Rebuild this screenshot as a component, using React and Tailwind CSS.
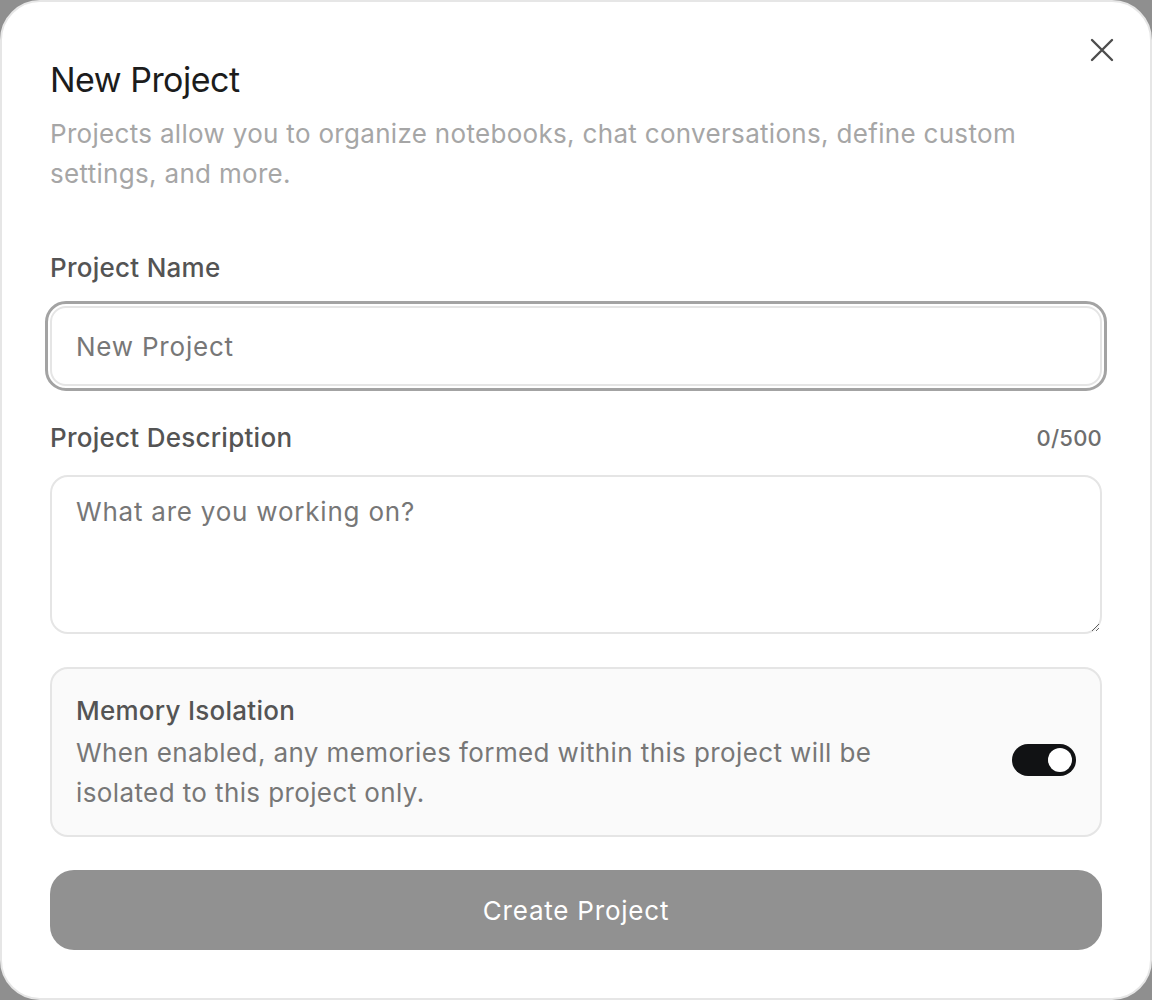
import { useState } from "react";

export default function App() {
  const [name, setName] = useState("");
  const [desc, setDesc] = useState("");
  const [isolated, setIsolated] = useState(true);

  return (
    <div className="min-h-screen bg-[#8f8f8f] font-['Inter',sans-serif]">
      <div className="relative h-[1000px] w-full rounded-[40px] border-2 border-[#e6e6e6] bg-white px-[48px] pt-[58px]">
        {/* Close */}
        <button className="absolute right-[34px] top-[34px] text-[#4d4d4d]">
          <svg width="28" height="28" viewBox="0 0 28 28" fill="none" stroke="currentColor" strokeWidth="2.4" strokeLinecap="round">
            <path d="M4 4L24 24M24 4L4 24" />
          </svg>
        </button>

        {/* Header */}
        <h2 className="text-[34px] leading-[40px] tracking-[-0.015em] text-[#1c1c1c]">New Project</h2>
        <p className="mt-[14px] max-w-[1000px] text-[26px] leading-[40px] tracking-[0.012em] text-[#a6a6a6]">
          Projects allow you to organize notebooks, chat conversations, define custom settings, and more.
        </p>

        {/* Name */}
        <label className="mt-[58px] block text-[26px] font-medium leading-[32px] tracking-[0.01em] text-[#545454]">
          Project Name
        </label>
        <input
          value={name}
          onChange={(e) => setName(e.target.value)}
          placeholder="New Project"
          className="mt-[22px] block h-[80px] w-full rounded-[16px] border-2 border-[#e5e5e5] px-[24px] text-[26px] tracking-[0.03em] text-[#222] outline-[3px] outline-offset-[2px] outline-[#a3a3a3] outline-solid placeholder:text-[#777]"
        />

        {/* Description */}
        <div className="mt-[36px] flex h-[32px] items-center justify-between">
          <label className="text-[26px] font-medium leading-[32px] tracking-[0.01em] text-[#545454]">
            Project Description
          </label>
          <span className="text-[22px] font-medium leading-[32px] tracking-[0.01em] text-[#6e6e6e]">{desc.length}/500</span>
        </div>
        <textarea
          value={desc}
          maxLength={500}
          onChange={(e) => setDesc(e.target.value)}
          placeholder="What are you working on?"
          className="mt-[21px] block h-[159px] w-full rounded-[18px] border-2 border-[#e5e5e5] px-[24px] py-[15px] text-[26px] leading-[40px] tracking-[0.03em] text-[#222] outline-none placeholder:text-[#777]"
        />

        {/* Memory isolation */}
        <div className="mt-[33px] flex h-[170px] items-center justify-between rounded-[18px] border-2 border-[#e5e5e5] bg-[#fafafa] px-[24px] pt-[4px]">
          <div className="max-w-[850px]">
            <div className="text-[26px] font-medium leading-[32px] tracking-[0.01em] text-[#545454]">Memory Isolation</div>
            <p className="mt-[6px] text-[26px] leading-[40px] tracking-[0.015em] text-[#777]">
              When enabled, any memories formed within this project will be isolated to this project only.
            </p>
          </div>
          <button
            onClick={() => setIsolated(!isolated)}
            className={`mt-[12px] flex h-[32px] w-[64px] shrink-0 items-center rounded-full p-[4px] ${isolated ? "justify-end bg-[#111214]" : "justify-start bg-[#d4d4d4]"}`}
          >
            <span className="h-[24px] w-[24px] rounded-full bg-white" />
          </button>
        </div>

        {/* Submit */}
        <button className="mt-[33px] flex h-[80px] w-full items-center justify-center rounded-[24px] bg-[#919191] text-[26px] tracking-[0.03em] text-white">
          Create Project
        </button>
      </div>
    </div>
  );
}
